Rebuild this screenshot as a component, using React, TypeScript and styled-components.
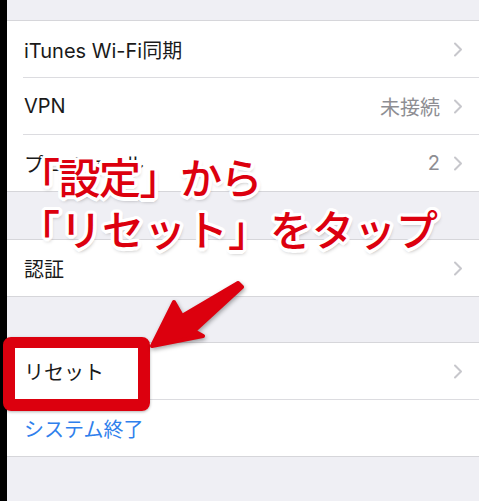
import styled, { createGlobalStyle } from "styled-components";

const RED = "#dc000e";

// white outline around the callout text, built as a ring of shadows
const outline = Array.from({ length: 16 }, (_, i) => {
  const a = (i / 16) * Math.PI * 2;
  const x = (Math.cos(a) * 3.5).toFixed(2);
  const y = (Math.sin(a) * 3.5).toFixed(2);
  return `${x}px ${y}px 0 #fff`;
}).join(", ");

const GlobalStyle = createGlobalStyle`
  html, body {
    margin: 0;
    padding: 0;
    background: #000;
  }
  body {
    font-family: "Inter", "Noto Sans CJK JP", sans-serif;
  }
`;

const Screen = styled.div`
  position: relative;
  width: 479px;
  height: 501px;
  overflow: hidden;
  padding-left: 7px;
  box-sizing: border-box;
  background: #000;
`;

const Page = styled.div`
  height: 100%;
  padding-top: 20px;
  box-sizing: border-box;
  background: #efeff4;
  display: flex;
  flex-direction: column;
`;

const Group = styled.div<{ $gap?: number }>`
  margin-top: ${(p) => p.$gap ?? 0}px;
  background: #fff;
  border-top: 1px solid #d6d6da;
  border-bottom: 1px solid #d6d6da;
`;

const Row = styled.div<{ $last?: boolean }>`
  height: 56px;
  margin-left: 16px;
  padding-right: 16px;
  display: flex;
  align-items: center;
  border-bottom: ${(p) => (p.$last ? "none" : "1px solid #dcdce0")};
  font-size: 20px;
  color: #1a1a1a;
`;

const Label = styled.span<{ $link?: boolean }>`
  flex: 1;
  padding-left: 1px;
  color: ${(p) => (p.$link ? "#2f80ec" : "inherit")};
`;

const Value = styled.span`
  margin-right: 13px;
  color: #8e8e93;
`;

const Chevron = () => (
  <svg width="10" height="15" viewBox="0 0 10 15">
    <polyline
      points="2,1.5 8,7.5 2,13.5"
      fill="none"
      stroke="#c7c7cc"
      strokeWidth="2"
      strokeLinecap="round"
      strokeLinejoin="round"
    />
  </svg>
);

const Callout = styled.div`
  position: absolute;
  left: 18px;
  top: 150px;
  font-family: "Noto Sans CJK JP", sans-serif;
  font-weight: 500;
  font-size: 42px;
  line-height: 52px;
  color: ${RED};
  white-space: pre;
  text-shadow: ${outline}, 1px 3px 4px rgba(0, 0, 0, 0.45);
`;

const CalloutLine = styled.div<{ $spacing: number }>`
  letter-spacing: ${(p) => p.$spacing}px;
`;

const Highlight = styled.div`
  position: absolute;
  left: 3px;
  top: 337px;
  width: 147px;
  height: 74px;
  box-sizing: border-box;
  border: 12px solid ${RED};
  border-top-width: 11px;
  border-radius: 8px;
  box-shadow: 0 1px 3px rgba(0, 0, 0, 0.3);
`;

const Arrow = styled.svg`
  position: absolute;
  left: 140px;
  top: 270px;
  filter: drop-shadow(1px 2px 2px rgba(0, 0, 0, 0.35));
`;

type Item = { label: string; value?: string; chevron?: boolean; link?: boolean };

const groups: { gap: number; items: Item[] }[] = [
  {
    gap: 0,
    items: [
      { label: "iTunes Wi-Fi同期", chevron: true },
      { label: "VPN", value: "未接続", chevron: true },
      { label: "プロファイル", value: "2", chevron: true },
    ],
  },
  { gap: 47, items: [{ label: "認証", chevron: true }] },
  {
    gap: 45,
    items: [
      { label: "リセット", chevron: true },
      { label: "システム終了", link: true },
    ],
  },
];

export default function App() {
  return (
    <>
      <GlobalStyle />
      <Screen>
        <Page>
          {groups.map((g, gi) => (
            <Group key={gi} $gap={g.gap}>
              {g.items.map((item, i) => (
                <Row key={item.label} $last={i === g.items.length - 1}>
                  <Label $link={item.link}>{item.label}</Label>
                  {item.value && <Value>{item.value}</Value>}
                  {item.chevron && <Chevron />}
                </Row>
              ))}
            </Group>
          ))}
        </Page>

        <Callout>
          <CalloutLine $spacing={-1.5}>「設定」から</CalloutLine>
          <CalloutLine $spacing={0}>「リセット」をタップ</CalloutLine>
        </Callout>
        <Highlight />
        <Arrow width="110" height="90" viewBox="0 0 110 90">
          <polygon
            points="12,76 34,32 42,46 98,13 102,17 54,61 63,66"
            fill={RED}
            stroke={RED}
            strokeWidth="4"
            strokeLinejoin="round"
          />
        </Arrow>
      </Screen>
    </>
  );
}
